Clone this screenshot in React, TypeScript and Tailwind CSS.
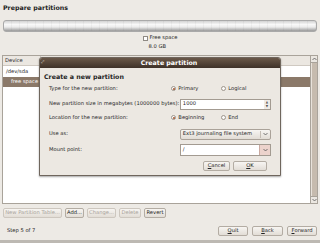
import React from 'react';

const font = "font-['DejaVu_Sans',sans-serif]";

function Radio({ checked, label }: { checked?: boolean; label: string }) {
  return (
    <div className="flex w-[55px] items-center gap-[2px]">
      <span className="flex h-[5px] w-[5px] items-center justify-center rounded-full border border-[#9c958c] bg-[#fbfaf8]">
        {checked && <span className="h-[2px] w-[2px] rounded-full bg-[#a0522d]" />}
      </span>
      <span>{label}</span>
    </div>
  );
}

function Btn({ label, disabled, w }: { label: React.ReactNode; disabled?: boolean; w: string }) {
  return (
    <div
      className={`flex h-[10px] ${w} items-center justify-center rounded-[2px] border bg-[linear-gradient(to_bottom,#f7f5f2,#e2ddd6)] ${
        disabled ? 'border-[#cdc7bf] text-[#a9a39b]' : 'border-[#b3aca3] text-[#222]'
      }`}
    >
      {label}
    </div>
  );
}

function Arrow({ className = '' }: { className?: string }) {
  return (
    <svg width="5" height="4" viewBox="0 0 5 4" className={className}>
      <path d="M0.5 1 L2.5 3 L4.5 1" fill="none" stroke="#555" strokeWidth="0.8" />
    </svg>
  );
}

export default function App() {
  return (
    <div className={`relative flex h-[243px] w-[320px] flex-col overflow-hidden bg-[#edeae5] text-[5.2px] text-[#262626] ${font}`}>
      {/* header */}
      <div className="h-[20px] px-[3px] pt-[3px] text-[6.3px] font-bold leading-[10px] text-[#1e1e1e]">Prepare partitions</div>

      {/* partition bar */}
      <div className="mx-[3px] h-[12px] rounded-[3px] border border-[#a9a9a9] bg-[image:repeating-linear-gradient(90deg,transparent_0_7px,rgba(0,0,0,0.035)_7px_8px),linear-gradient(to_bottom,#d2d2d2,#f8f8f8_35%,#ececec_60%,#9a9a9a)]" />

      {/* legend */}
      <div className="flex h-[23px] justify-center pt-[2px]">
        <div className="flex flex-col">
          <div className="flex h-[8px] items-center gap-[2px]">
            <span className="h-[5px] w-[5px] border border-[#8f8a84] bg-white" />
            <span>Free space</span>
          </div>
          <div className="h-[8px] pl-[6px] leading-[8px]">8.0 GB</div>
        </div>
      </div>

      {/* table */}
      <div className="mx-[2px] flex h-[149px]">
        <div className="flex flex-1 flex-col border border-[#a9a39a] bg-white">
          <div className="flex h-[10px] border-b border-[#cfc9c1] bg-[#ebe7e1]">
            <div className="flex w-[38px] items-center border-r border-[#cfc9c1] pl-[2px]">Device</div>
            <div className="flex-1" />
          </div>
          <div className="flex h-[11px] items-center pl-[3px]">/dev/sda</div>
          <div className="flex h-[10px] items-center bg-[#8b7969] pl-[8px] text-white">free space</div>
        </div>
        <div className="flex w-[7px] flex-col border border-l-0 border-[#a9a39a] bg-[#c6bbae]">
          <div className="flex h-[7px] items-center justify-center border-b border-[#a9a39a] bg-[#ebe7e1]">
            <Arrow className="rotate-180" />
          </div>
          <div className="flex-1 border-l border-[#e8e2da]" />
          <div className="flex h-[7px] items-center justify-center border-t border-[#a9a39a] bg-[#ebe7e1]">
            <Arrow />
          </div>
        </div>
      </div>

      {/* partition buttons */}
      <div className="flex h-[18px] items-center gap-[3px] pl-[3px]">
        <Btn label="New Partition Table..." disabled w="w-[59px]" />
        <Btn label="Add..." w="w-[19px]" />
        <Btn label="Change..." disabled w="w-[29px]" />
        <Btn label="Delete" disabled w="w-[22px]" />
        <Btn label="Revert" w="w-[22px]" />
      </div>

      {/* footer */}
      <div className="flex h-[18px] items-center pl-[7px] pr-[3px]">
        <span className="flex-1">Step 5 of 7</span>
        <div className="flex gap-[4px]">
          <Btn label={<><u>Q</u>uit</>} w="w-[30px]" />
          <Btn label={<><u>B</u>ack</>} w="w-[31px]" />
          <Btn label={<><u>F</u>orward</>} w="w-[30px]" />
        </div>
      </div>
      <div className="h-[3px] bg-[#bdb9b3]" />

      {/* dialog */}
      <div className="absolute left-[39px] top-[57px] flex h-[119px] w-[242px] flex-col rounded-t-[3px] border border-[#6f665d] bg-[#ece8e2] shadow-[0_1px_2px_rgba(0,0,0,0.35)]">
        <div className="relative flex h-[10px] items-center justify-center rounded-t-[2px] bg-[linear-gradient(to_bottom,#6a5849,#3e3128)] pl-[18px] text-[6.3px] font-bold text-white">
          <span className="absolute left-[1px] top-[1px] text-[4px] text-[#bfb3a6]">⤢</span>
          Create partition
        </div>
        <div className="flex flex-col px-[9px] pt-[4px]">
          <div className="-ml-[5px] h-[9px] text-[6.3px] font-bold leading-[9px] text-[#1e1e1e]">Create a new partition</div>

          <div className="mt-[2px] flex h-[12px] items-center">
            <span className="w-[135px]">Type for the new partition:</span>
            <Radio checked label="Primary" />
            <Radio label="Logical" />
          </div>

          <div className="mt-[3px] flex h-[12px] items-center">
            <span className="w-[135px]">New partition size in megabytes (1000000 bytes):</span>
            <div className="flex h-[11px] w-[94px] border border-[#a39b91] bg-white">
              <span className="flex flex-1 items-center pl-[2px]">1000</span>
              <div className="flex w-[6px] flex-col items-center justify-center bg-[#efebe6] text-[3px] leading-[4px] text-[#555]">
                <span>▲</span>
                <span>▼</span>
              </div>
            </div>
          </div>

          <div className="mt-[2px] flex h-[12px] items-center">
            <span className="w-[135px]">Location for the new partition:</span>
            <Radio checked label="Beginning" />
            <Radio label="End" />
          </div>

          <div className="mt-[4px] flex h-[12px] items-center">
            <span className="w-[135px]">Use as:</span>
            <div className="flex h-[11px] w-[94px] items-center rounded-[2px] border border-[#aaa299] bg-[linear-gradient(to_bottom,#f7f5f2,#e1dcd5)]">
              <span className="flex-1 pl-[2px]">Ext3 journaling file system</span>
              <div className="flex h-[7px] w-[10px] items-center justify-center border-l border-[#c4bdb4]">
                <Arrow />
              </div>
            </div>
          </div>

          <div className="mt-[4px] flex h-[12px] items-center">
            <span className="w-[135px]">Mount point:</span>
            <div className="flex h-[12px] w-[94px] border border-[#a39b91] bg-white">
              <span className="flex flex-1 items-center pl-[2px]">/</span>
              <div className="flex w-[11px] items-center justify-center border-l border-[#c9a9a0] bg-[#ecd3cc]">
                <Arrow />
              </div>
            </div>
          </div>

          <div className="mt-[5px] flex h-[11px] justify-end gap-[3px] pr-[4px]">
            <Btn label={<><u>C</u>ancel</>} w="w-[27px]" />
            <Btn label={<><u>O</u>K</>} w="w-[34px]" />
          </div>
        </div>
      </div>
    </div>
  );
}
